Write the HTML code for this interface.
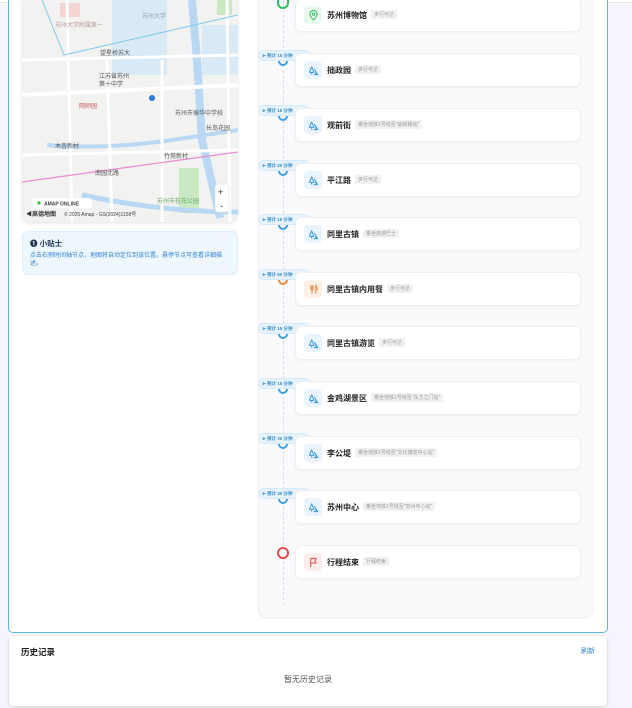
<!DOCTYPE html>
<html><head><meta charset="utf-8"><style>
*{margin:0;padding:0;box-sizing:border-box}
body{width:632px;height:708px;background:#f7f4fd;position:relative;overflow:hidden;font-family:"Liberation Sans","Noto Sans CJK SC",sans-serif}
.topline{position:absolute;left:0;top:0;width:632px;height:3px;background:#fff;border-bottom:1px solid #e6e6ea}
.main{position:absolute;left:8px;top:-4px;width:600px;height:637px;background:#fff;border:1.5px solid #5cb8e6;border-radius:0 0 5px 5px}
.map{position:absolute;left:22px;top:0;width:216px;height:222px;background:#f1f1f0;border-radius:0 0 8px 8px;overflow:hidden;box-shadow:0 1px 3px rgba(0,0,0,.12)}
.tip{position:absolute;left:22px;top:231px;width:216px;height:44px;background:#eef6fe;border:1px solid #dcecfb;border-radius:6px;padding:6px 7px}
.tip b{font-size:7.5px;color:#1c3550;display:block}
.tip p{font-size:6px;color:#2f86d0;line-height:8px;margin-top:3px}
.tl{position:absolute;left:258px;top:-10px;width:336px;height:628px;background:#faf9fb;border-radius:8px;border:1px solid #f0eef2}
.vline{position:absolute;left:283px;top:0;height:605px;border-left:1px dashed #dedde3}
.card{position:absolute;left:295px;width:286px;height:34px;background:#fff;border:1px solid #efeef2;border-radius:6px;box-shadow:0 1px 2px rgba(0,0,0,.04)}
.ic{position:absolute;left:8px;top:7px;width:18px;height:18px;border-radius:4px;background:#e9f4fe;display:flex;align-items:center;justify-content:center}
.nm{position:absolute;left:31px;top:11px;font-size:8px;font-weight:bold;color:#222;white-space:nowrap}
.tag{display:inline-block;font-size:5px;font-weight:normal;color:#999;background:#f1f1f3;padding:1px 3px;border-radius:2px;margin-left:4px;vertical-align:2px}
.badge{position:absolute;left:258px;width:52px;height:11px;background:#e6f3fd;border:1px solid #d4eafb;border-radius:6px;font-size:4.5px;color:#3a8cc9;line-height:9px;padding-left:3px;font-weight:bold;white-space:nowrap;overflow:hidden}
.arc{position:absolute;left:278px;width:10px;height:5px;border:2px solid #3aa0e6;border-top:none;border-radius:0 0 6px 6px}
.hist{position:absolute;left:9px;top:636px;width:598px;height:70px;background:#fff;border-radius:4px;box-shadow:0 1px 3px rgba(0,0,0,.15)}
</style></head><body>
<svg width="0" height="0" style="position:absolute"><defs>
<symbol id="tree" viewBox="0 0 12 12"><path d="M4 2 L1.5 8 H6.5 Z M4 8 V10.5 M7 4.5 L10.5 10.5 H6 M8.5 10.5 V8" fill="none" stroke="#3a9be0" stroke-width="1.1" stroke-linejoin="round"/></symbol>
</defs></svg>
<div class="topline"></div>
<div class="main"></div>
<div class="map">
<svg width="216" height="222" viewBox="0 0 216 222">
<rect width="216" height="222" fill="#f2f2f1"/>
<rect x="90" y="0" width="55" height="75" fill="#d9e9f6"/>
<rect x="180" y="25" width="36" height="50" fill="#d9e9f6"/>
<rect x="38" y="3" width="20" height="14" fill="#f5d4d4"/>
<rect x="195" y="0" width="15" height="15" fill="#c9e9c2"/>
<rect x="157" y="168" width="20" height="45" fill="#c9e9c2"/>
<path d="M170 0 L175 60 L180 140 L198 218" stroke="#b8d8f4" stroke-width="8" fill="none"/>
<path d="M25 145 Q80 150 150 140 L216 130" stroke="#b8d8f4" stroke-width="4" fill="none"/>
<path d="M60 195 Q140 212 216 212" stroke="#b8d8f4" stroke-width="5" fill="none"/>
<path d="M0 95 L216 85" stroke="#fff" stroke-width="4"/>
<path d="M0 60 L216 55" stroke="#fff" stroke-width="3"/>
<path d="M0 155 L216 150" stroke="#fff" stroke-width="3"/>
<path d="M45 0 L50 222 M85 60 L90 222 M140 60 L140 222 M205 0 L208 222" stroke="#fff" stroke-width="3"/>
<path d="M20 0 L42 55 L216 15" stroke="#7ec9ef" stroke-width="1" fill="none"/>
<path d="M0 182 L216 152" stroke="#e98bd0" stroke-width="1.2"/>
<circle cx="130" cy="98" r="3" fill="#2a7ae6"/>
<g font-size="6" fill="#555">
<text x="78" y="55">望星桥苏大</text><text x="77" y="78">江苏省苏州</text><text x="77" y="86">第十中学</text>
<text x="57" y="108" fill="#c55">网师园</text><text x="153" y="115">苏州市振华中学校</text><text x="184" y="130">长岛花园</text>
<text x="33" y="148">木杏新村</text><text x="142" y="158">竹苑新村</text><text x="73" y="175">南园北路</text><text x="216" y="165">竹辉桥</text>
<text x="135" y="203" fill="#6aa96a">苏州市桂花公园</text><text x="120" y="18" fill="#8aa">苏州大学</text><text x="33" y="27" fill="#b99">苏州大学附属第一</text>
</g>
<rect x="10" y="198" width="60" height="10" rx="3" fill="#fff"/><circle cx="17" cy="203" r="1.6" fill="#2c2"/>
<text x="22" y="205.5" font-size="5" font-weight="bold" fill="#444">AMAP ONLINE</text>
<text x="4" y="216" font-size="6" font-weight="bold" fill="#333">◀高德地图</text>
<text x="42" y="216" font-size="5" fill="#444">© 2025 Amap - GS(2024)1158号</text>
<rect x="193" y="184" width="14" height="28" rx="3" fill="#fff" stroke="#ddd" stroke-width=".5"/>
<text x="196" y="195" font-size="9" fill="#333">+</text><text x="198" y="209" font-size="9" fill="#333">-</text>
</svg></div>
<div class="tip"><b>❶ 小贴士</b><p>点击右侧时间轴节点，地图将自动定位到该位置。悬停节点可查看详细描述。</p></div>
<div class="tl"></div>
<div class="vline"></div>
<div style="position:absolute;left:277px;top:0px;width:12px;height:9px;border:2px solid #2fbf5a;border-top:none;border-radius:0 0 7px 7px"></div>
<div style="position:absolute;left:277px;top:547px;width:12px;height:12px;border:2px solid #e84a4a;border-radius:50%;background:#fff"></div>

<div class="card" style="top:-2px"><div class="ic" style="background:#eaf8ee"><svg width="11" height="11" viewBox="0 0 12 12"><path d="M6 11 C3 7.5 2 6 2 4.5 A4 4 0 0 1 10 4.5 C10 6 9 7.5 6 11Z" fill="none" stroke="#2fbf5a" stroke-width="1.1"/><circle cx="6" cy="4.5" r="1.4" fill="none" stroke="#2fbf5a" stroke-width="1"/></svg></div><div class="nm">苏州博物馆<span class="tag">步行可达</span></div></div>

<div class="badge" style="top:50px">➤ 预计 15 分钟</div><div class="arc" style="top:61px"></div>
<div class="card" style="top:53px"><div class="ic"><svg width="11" height="11"><use href="#tree"/></svg></div><div class="nm">拙政园<span class="tag">步行可达</span></div></div>

<div class="badge" style="top:105px">➤ 预计 15 分钟</div><div class="arc" style="top:116px"></div>
<div class="card" style="top:108px"><div class="ic"><svg width="11" height="11"><use href="#tree"/></svg></div><div class="nm">观前街<span class="tag">乘坐地铁1号线至"临顿路站"</span></div></div>

<div class="badge" style="top:160px">➤ 预计 20 分钟</div><div class="arc" style="top:171px"></div>
<div class="card" style="top:163px"><div class="ic"><svg width="11" height="11"><use href="#tree"/></svg></div><div class="nm">平江路<span class="tag">步行可达</span></div></div>

<div class="badge" style="top:214px">➤ 预计 15 分钟</div><div class="arc" style="top:225px"></div>
<div class="card" style="top:217px"><div class="ic"><svg width="11" height="11"><use href="#tree"/></svg></div><div class="nm">同里古镇<span class="tag">乘坐旅游巴士</span></div></div>

<div class="badge" style="top:269px">➤ 预计 60 分钟</div><div class="arc" style="top:280px;border-color:#f08a3c"></div>
<div class="card" style="top:272px"><div class="ic" style="background:#fdf0e6"><svg width="11" height="11" viewBox="0 0 12 12"><path d="M3 1.5 V5 Q3 6.5 4.3 6.5 Q5.6 6.5 5.6 5 V1.5 M4.3 1.5 V10.5 M8.5 10.5 V1.5 Q10 3 10 6 H8.5" fill="none" stroke="#f08a3c" stroke-width="1.1"/></svg></div><div class="nm">同里古镇内用餐<span class="tag">步行可达</span></div></div>

<div class="badge" style="top:323px">➤ 预计 15 分钟</div><div class="arc" style="top:334px"></div>
<div class="card" style="top:326px"><div class="ic"><svg width="11" height="11"><use href="#tree"/></svg></div><div class="nm">同里古镇游览<span class="tag">步行可达</span></div></div>

<div class="badge" style="top:378px">➤ 预计 15 分钟</div><div class="arc" style="top:389px"></div>
<div class="card" style="top:381px"><div class="ic"><svg width="11" height="11"><use href="#tree"/></svg></div><div class="nm">金鸡湖景区<span class="tag">乘坐地铁1号线至"东方之门站"</span></div></div>

<div class="badge" style="top:433px">➤ 预计 30 分钟</div><div class="arc" style="top:444px"></div>
<div class="card" style="top:436px"><div class="ic"><svg width="11" height="11"><use href="#tree"/></svg></div><div class="nm">李公堤<span class="tag">乘坐地铁1号线至"文化博览中心站"</span></div></div>

<div class="badge" style="top:488px">➤ 预计 30 分钟</div><div class="arc" style="top:499px"></div>
<div class="card" style="top:490px"><div class="ic"><svg width="11" height="11"><use href="#tree"/></svg></div><div class="nm">苏州中心<span class="tag">乘坐地铁1号线至"苏州中心站"</span></div></div>

<div class="card" style="top:545px"><div class="ic" style="background:#fdecec"><svg width="11" height="11" viewBox="0 0 12 12"><path d="M3 11 V1.5 H9 L7.5 4 L9 6.5 H3" fill="none" stroke="#e84a4a" stroke-width="1.1" stroke-linejoin="round"/></svg></div><div class="nm">行程结束<span class="tag">行程结束</span></div></div>

<div class="hist">
<div style="position:absolute;left:12px;top:10px;font-size:8.5px;font-weight:bold;color:#222">历史记录</div>
<div style="position:absolute;right:12px;top:10px;font-size:7px;color:#2f86d0">刷新</div>
<div style="position:absolute;left:0;width:598px;top:38px;text-align:center;font-size:8px;color:#555">暂无历史记录</div>
</div>
</body></html>
